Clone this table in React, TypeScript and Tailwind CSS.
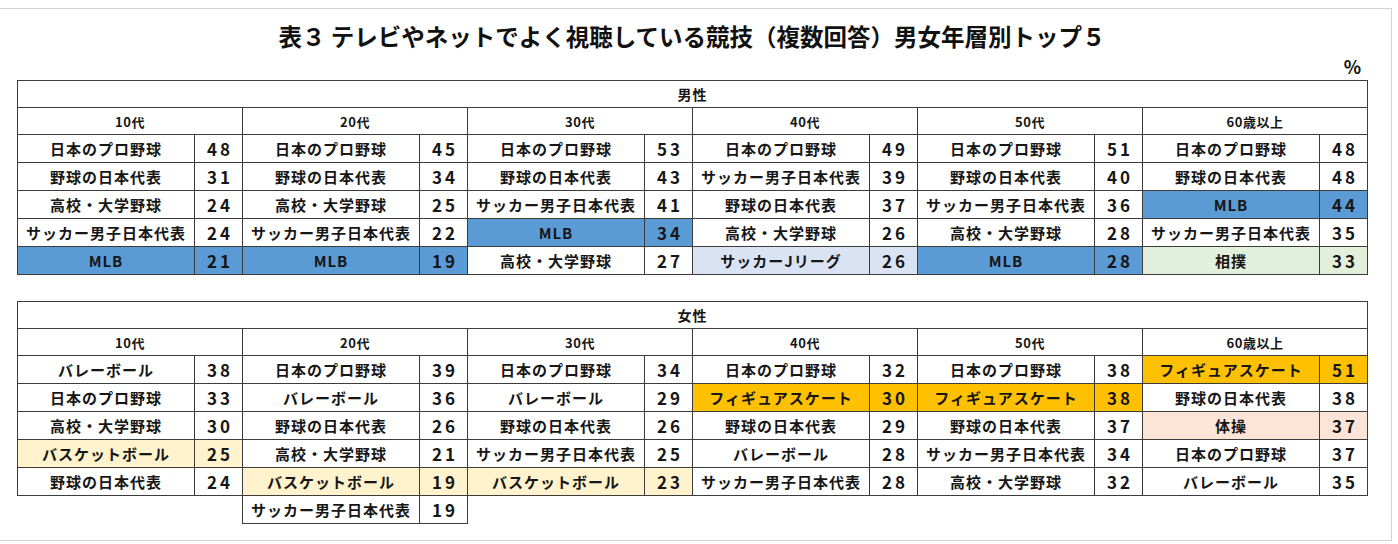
import React from 'react';

type Tint = 'blue' | 'orange' | 'yellow' | 'green' | 'pink' | 'lavender';
type Entry = [string, number, Tint?];

const AGES = ['10代', '20代', '30代', '40代', '50代', '60歳以上'];

const TINT: Record<Tint, string> = {
  blue: 'bg-[#5b9bd5]',
  orange: 'bg-[#ffc000]',
  yellow: 'bg-[#fff2cc]',
  green: 'bg-[#e2efda]',
  pink: 'bg-[#fce4d6]',
  lavender: 'bg-[#dae3f3]',
};

const MALE: Entry[][] = [
  [['日本のプロ野球', 48], ['野球の日本代表', 31], ['高校・大学野球', 24], ['サッカー男子日本代表', 24], ['MLB', 21, 'blue']],
  [['日本のプロ野球', 45], ['野球の日本代表', 34], ['高校・大学野球', 25], ['サッカー男子日本代表', 22], ['MLB', 19, 'blue']],
  [['日本のプロ野球', 53], ['野球の日本代表', 43], ['サッカー男子日本代表', 41], ['MLB', 34, 'blue'], ['高校・大学野球', 27]],
  [['日本のプロ野球', 49], ['サッカー男子日本代表', 39], ['野球の日本代表', 37], ['高校・大学野球', 26], ['サッカーJリーグ', 26, 'lavender']],
  [['日本のプロ野球', 51], ['野球の日本代表', 40], ['サッカー男子日本代表', 36], ['高校・大学野球', 28], ['MLB', 28, 'blue']],
  [['日本のプロ野球', 48], ['野球の日本代表', 48], ['MLB', 44, 'blue'], ['サッカー男子日本代表', 35], ['相撲', 33, 'green']],
];

const FEMALE: Entry[][] = [
  [['バレーボール', 38], ['日本のプロ野球', 33], ['高校・大学野球', 30], ['バスケットボール', 25, 'yellow'], ['野球の日本代表', 24]],
  [['日本のプロ野球', 39], ['バレーボール', 36], ['野球の日本代表', 26], ['高校・大学野球', 21], ['バスケットボール', 19, 'yellow'], ['サッカー男子日本代表', 19]],
  [['日本のプロ野球', 34], ['バレーボール', 29], ['野球の日本代表', 26], ['サッカー男子日本代表', 25], ['バスケットボール', 23, 'yellow']],
  [['日本のプロ野球', 32], ['フィギュアスケート', 30, 'orange'], ['野球の日本代表', 29], ['バレーボール', 28], ['サッカー男子日本代表', 28]],
  [['日本のプロ野球', 38], ['フィギュアスケート', 38, 'orange'], ['野球の日本代表', 37], ['サッカー男子日本代表', 34], ['高校・大学野球', 32]],
  [['フィギュアスケート', 51, 'orange'], ['野球の日本代表', 38], ['体操', 37, 'pink'], ['日本のプロ野球', 37], ['バレーボール', 35]],
];

function RankTable({ label, data }: { label: string; data: Entry[][] }) {
  const rowCount = Math.max(...data.map((d) => d.length));
  const rows = Array.from({ length: rowCount }, (_, i) => i);

  return (
    <table className="table-fixed border-collapse w-[1350px] text-[#161616] font-bold">
      <colgroup>
        {AGES.map((a) => (
          <React.Fragment key={a}>
            <col className="w-[177px]" />
            <col className="w-[48px]" />
          </React.Fragment>
        ))}
      </colgroup>
      <tbody>
        <tr className="h-[27px]">
          <td colSpan={12} className="border border-[#3c3c3c] text-center text-[14px] tracking-[1px] leading-none">
            {label}
          </td>
        </tr>
        <tr className="h-[27px]">
          {AGES.map((a) => (
            <td key={a} colSpan={2} className="border border-[#3c3c3c] text-center text-[13px] tracking-[0.5px] leading-none">
              {a}
            </td>
          ))}
        </tr>
        {rows.map((r) => (
          <tr key={r} className="h-[28px]">
            {data.map((col, c) => {
              const e = col[r];
              if (!e) {
                return (
                  <React.Fragment key={c}>
                    <td />
                    <td />
                  </React.Fragment>
                );
              }
              const bg = e[2] ? TINT[e[2]] : 'bg-white';
              return (
                <React.Fragment key={c}>
                  <td className={`border border-[#3c3c3c] ${bg} text-center text-[15px] tracking-[1px] leading-none whitespace-nowrap`}>
                    {e[0]}
                  </td>
                  <td className={`border border-[#3c3c3c] ${bg} text-center text-[17px] tracking-[3px] pl-[3px] leading-none`}>
                    {e[1]}
                  </td>
                </React.Fragment>
              );
            })}
          </tr>
        ))}
      </tbody>
    </table>
  );
}

export default function App() {
  return (
    <div className="w-[1398px] h-[544px] bg-white pt-[8px] font-['Noto_Sans_CJK_JP',sans-serif]">
      <div className="w-[1392px] h-[533px] border-t border-r border-b border-[#d3d3d3] pl-[17px] pt-[11px]">
        <div className="w-[1350px]">
          <h1 className="text-center text-[23.5px] font-bold leading-[32px] text-[#111]">
            表３ テレビやネットでよく視聴している競技（複数回答）男女年層別トップ５
          </h1>
          <div className="flex justify-end pr-[6px] mt-[3px] mb-[3px]">
            <span className="text-[18px] font-bold leading-[22px] text-[#111]">%</span>
          </div>
          <RankTable label="男性" data={MALE} />
          <div className="h-[26px]" />
          <RankTable label="女性" data={FEMALE} />
        </div>
      </div>
    </div>
  );
}
